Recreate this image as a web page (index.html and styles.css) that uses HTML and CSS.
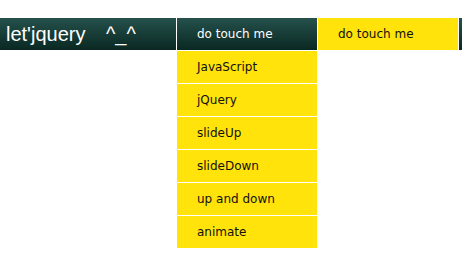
FILE: index.html
```html
<!DOCTYPE html>
<html lang="en">
<head>
  <meta charset="UTF-8" />
  <title>let'jquery</title>
  <link rel="stylesheet" href="styles.css">
</head>
<body>
  <div class="nav">
    <div class="logo">let'jquery <span class="face">^_^</span></div>
    <ul class="menu">
      <li class="item">
        <a class="link" href="#">do touch me</a>
        <ul class="sub">
          <li><a href="#">JavaScript</a></li>
          <li><a href="#">jQuery</a></li>
          <li><a href="#">slideUp</a></li>
          <li><a href="#">slideDown</a></li>
          <li><a href="#">up and down</a></li>
          <li><a href="#">animate</a></li>
        </ul>
      </li>
      <li class="item active"><a class="link" href="#">do touch me</a></li>
    </ul>
  </div>
</body>
</html>
```

FILE: styles.css
```css
body {
  margin: 0;
  padding-top: 18px;
  min-height: 230px;
  font-family: "DejaVu Sans", Verdana, sans-serif;
  background: #fff;
}
ul {
  list-style: none;
  margin: 0;
  padding: 0;
}
a {
  text-decoration: none;
  color: inherit;
}
.nav {
  display: flex;
  height: 32px;
  background: linear-gradient(#25514c, #0a2822);
}
.logo {
  flex: none;
  width: 170px;
  padding-left: 6px;
  line-height: 32px;
  white-space: nowrap;
  font-family: "Liberation Sans", Arial, sans-serif;
  font-size: 20px;
  color: #fff;
}
.face {
  margin-left: 15px;
}
.menu {
  display: flex;
  flex: none;
  border-right: 1px solid #fff;
}
.item {
  flex: none;
  width: 140px;
  border-left: 1px solid #fff;
  font-size: 12px;
  line-height: 32px;
  color: #fff;
}
.link {
  display: block;
  height: 32px;
  padding-left: 20px;
}
.item.active .link {
  background: #ffe30a;
  color: #111;
}
.sub {
  margin-top: 1px;
}
.sub li {
  background: #ffe30a;
  color: #111;
  border-bottom: 1px solid #fff;
}
.sub li:last-child {
  border-bottom: none;
}
.sub a {
  display: block;
  padding-left: 20px;
}
```
